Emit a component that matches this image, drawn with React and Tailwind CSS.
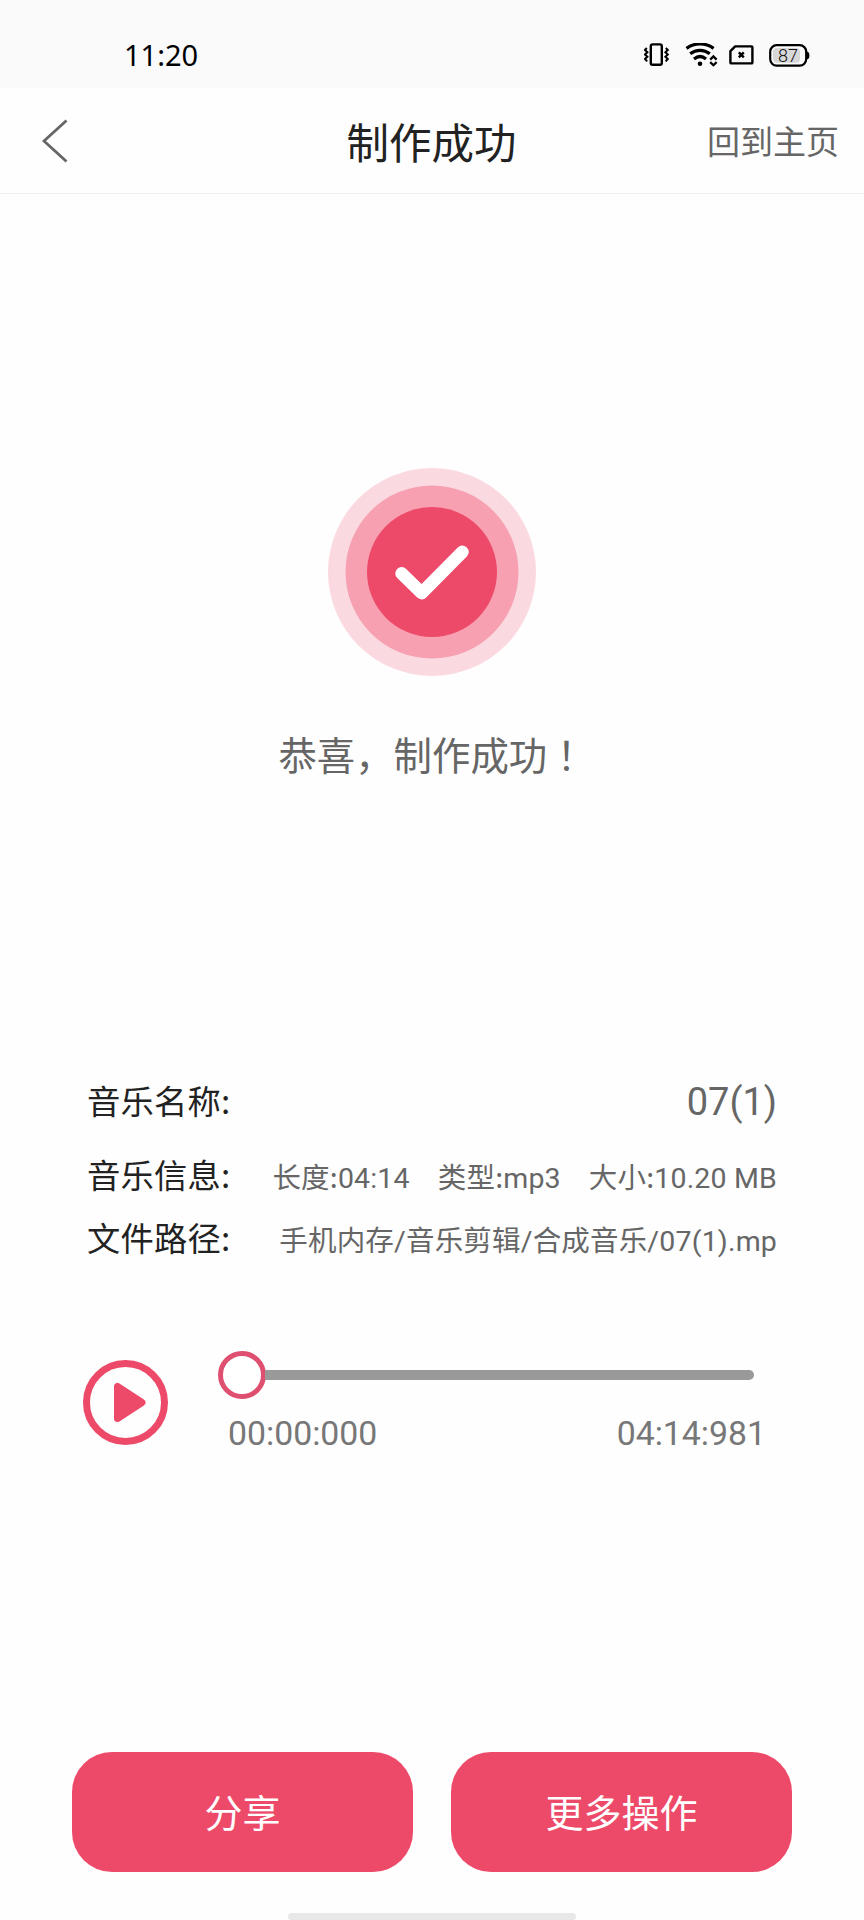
import { useState } from "react";

const details = [
  {
    label: "音乐信息:",
    value: [
      ["长度:", "04:14"],
      ["类型:", "mp3"],
      ["大小:", "10.20 MB"],
    ],
  },
  {
    label: "文件路径:",
    value: [["手机内存", "/音乐剪辑/合成音乐/07(1).mp"]],
  },
];

function VibrateIcon() {
  return (
    <svg viewBox="0 0 26 24" className="w-[26px] h-6" fill="none" stroke="#000">
      <rect x="6.8" y="1.4" width="11" height="20.4" rx="1.8" strokeWidth="2.4" />
      <path d="M2.8 5 1 7l2.4 2.2L1 11.5l2.4 2.2L1 16l2.2 2.4M21.800 5l2 2-2.400 2.200 2.400 2.300-2.400 2.200 2.400 2.300-2.200 2.400" strokeWidth="2" />
    </svg>
  );
}

function WifiIcon() {
  return (
    <svg viewBox="0 0 33 24" className="w-[33px] h-6" fill="none" stroke="#000">
      <path d="M1.5 5.4C9.5-.6 20.6-.6 28.6 5.4" strokeWidth="3.2" />
      <path d="M5.2 10.8C11 6.1 19 6.1 24.8 10.8" strokeWidth="3.2" />
      <path d="M9 16C12.8 12.9 17.4 12.9 21 16" strokeWidth="3.2" />
      <circle cx="15" cy="20.8" r="2.3" fill="#000" stroke="none" />
      <path d="m25.2 16.6 3.2-3.2 3.2 3.2M25.2 19.1l3.2 3.2 3.2-3.2" strokeWidth="2.2" />
    </svg>
  );
}

function SimIcon() {
  return (
    <svg viewBox="0 0 25 20" className="w-[25px] h-5" fill="none" stroke="#000">
      <path d="M6.2 1.4H22.4q1 0 1 1V17.4q0 1-1 1H2.4q-1 0-1-1V6.2Z" strokeWidth="2.4" strokeLinejoin="round" />
      <path d="m9.8 7.4 5 5M14.8 7.4l-5 5" strokeWidth="2.4" />
    </svg>
  );
}

function BatteryIcon() {
  return (
    <svg viewBox="0 0 41 23" className="w-[41px] h-[23px]">
      <rect x="1.2" y="1.2" width="36" height="20.4" rx="6.5" fill="#fafafa" stroke="#000" strokeWidth="2.2" />
      <rect x="4" y="4" width="27" height="14.8" rx="4" fill="#d8d8d8" />
      <path d="M38 7.5q2.4.6 2.4 3.9T38 15.3Z" fill="#000" />
      <text x="19" y="17.6" textAnchor="middle" fontSize="18" fill="#111" className="font-light font-['Roboto',sans-serif]">87</text>
    </svg>
  );
}

function SuccessMark() {
  return (
    <svg viewBox="0 0 208 208" className="w-52 h-52">
      <circle cx="104" cy="104" r="104" fill="#fbd9e0" />
      <circle cx="104" cy="104" r="86.5" fill="#f6a0b1" />
      <circle cx="104" cy="104" r="65" fill="#ed4a6a" />
      <path d="m73.7 105.5 20 19.5 40.6-41" fill="none" stroke="#fff" strokeWidth="12.8" strokeLinecap="round" strokeLinejoin="round" />
    </svg>
  );
}

export default function App() {
  const [position] = useState(0);

  return (
    <div className="w-[864px] h-[1920px] flex flex-col overflow-hidden bg-[#fefefe] font-['Roboto','Noto_Sans_CJK_SC',sans-serif]">
      <div className="h-[88px] shrink-0 bg-[#fafafa] flex items-center justify-between pl-[124px] pr-[54px] pt-[22px]">
        <span className="text-[29px] leading-none pb-[2px] text-black font-['Noto_Sans',sans-serif]">11:20</span>
        <div className="flex items-center">
          <VibrateIcon />
          <span className="ml-[15px] flex"><WifiIcon /></span>
          <span className="ml-[11px] flex"><SimIcon /></span>
          <span className="ml-[15px] flex"><BatteryIcon /></span>
        </div>
      </div>

      <header className="h-[106px] shrink-0 grid grid-cols-[1fr_auto_1fr] items-center border-b border-[#f1f1f1] pl-10 pr-[25px]">
        <button className="flex">
          <svg viewBox="0 0 28 44" className="w-7 h-11" fill="none" stroke="#666" strokeWidth="2.8">
            <path d="M26.5 1.5 4 22 26.5 42.500" />
          </svg>
        </button>
        <h1 className="text-[42.5px] leading-none text-[#222] -ml-4 pt-[10px]">制作成功</h1>
        <button className="justify-self-end text-[33px] leading-none text-[#666] pt-1">回到主页</button>
      </header>

      <section className="h-[850px] shrink-0 flex flex-col items-center pt-[274px]">
        <SuccessMark />
        <p className="mt-[49px] text-[38.4px] leading-[56px] text-[#666]">
          恭喜，制作成功<span className="font-['Noto_Sans_CJK_JP',sans-serif]">！</span>
        </p>
      </section>

      <section className="h-[244px] shrink-0 px-[87px]">
        <div className="h-[107px] pt-[33px] flex justify-between">
          <span className="text-[33.3px] leading-[46px] tracking-[0.2px] text-[#222] font-['Noto_Sans_CJK_SC',sans-serif]">音乐名称:</span>
          <span className="text-[38px] leading-[51px] text-[#666]">07(1)</span>
        </div>
        {details.map((row) => (
          <div key={row.label} className="h-[63px] flex justify-between">
            <span className="text-[33.3px] leading-[45px] tracking-[0.2px] text-[#222] font-['Noto_Sans_CJK_SC',sans-serif]">{row.label}</span>
            <span className="flex gap-7 text-[28.5px] leading-[49px] tracking-[0.18px] text-[#666] whitespace-nowrap">
              {row.value.map(([name, text]) => (
                <span key={name}>
                  <span className="font-['Noto_Sans_CJK_SC',sans-serif]">{name}</span>
                  {text}
                </span>
              ))}
            </span>
          </div>
        ))}
      </section>

      <section className="shrink-0 mt-[63px] pl-[83px] pr-[98px] flex">
        <button className="mt-[9px] w-[85px] h-[85px] shrink-0">
          <svg viewBox="0 0 85 85" className="w-full h-full">
            <circle cx="42.5" cy="42.5" r="39" fill="none" stroke="#ed4a6a" strokeWidth="7" />
            <path d="M34.5 26.5v32l24.5-16Z" fill="#ed4a6a" stroke="#ed4a6a" strokeWidth="7" strokeLinejoin="round" />
          </svg>
        </button>
        <div className="ml-[50px] flex-1">
          <div className="h-12 flex items-center pr-[12px]">
            <span className="h-[10px] bg-[#ed4a6a]" style={{ width: `${position}%` }} />
            <span className="w-12 h-12 shrink-0 rounded-full border-[5px] border-[#de4f70] bg-white" />
            <span className="h-[10px] flex-1 -ml-px rounded-r-full bg-[#999]" />
          </div>
          <div className="flex justify-between pl-[10px] mt-[15px] text-[33.8px] leading-[40px] text-[#777]">
            <span>00:00:000</span>
            <span>04:14:981</span>
          </div>
        </div>
      </section>

      <footer className="mt-auto px-[72px] flex flex-col items-center">
        <div className="w-full flex gap-[38px] text-[38px] text-white">
          <button className="flex-1 h-[120px] pt-1 rounded-[40px] bg-[#ed4a6a]">分享</button>
          <button className="flex-1 h-[120px] pt-1 rounded-[40px] bg-[#ed4a6a]">更多操作</button>
        </div>
        <div className="mt-[41px] w-72 h-[7px] rounded-full bg-[#e8e8e8]" />
      </footer>
    </div>
  );
}
